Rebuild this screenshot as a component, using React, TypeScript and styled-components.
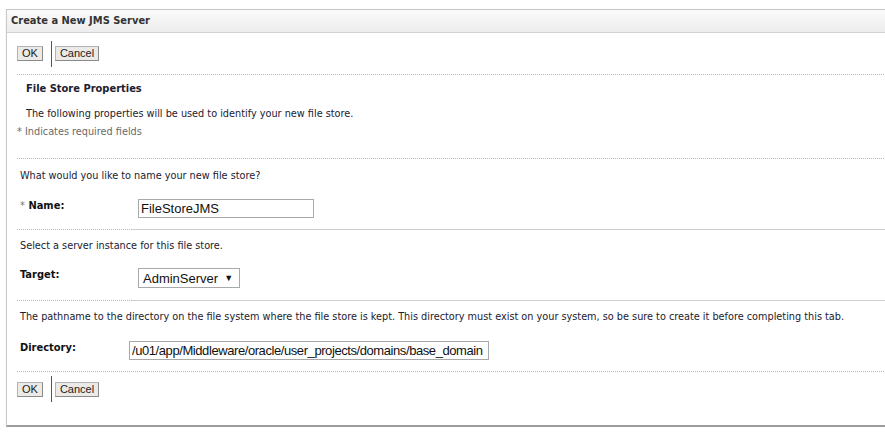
import React from "react";
import styled, { createGlobalStyle } from "styled-components";

const Global = createGlobalStyle`
  html, body { margin: 0; padding: 0; background: #fff; overflow: hidden; }
  body { font-family: "Liberation Sans", Arial, sans-serif; font-size: 11px; color: #1a1a1a; }
`;

const Page = styled.div`
  padding: 9px 0 0 6px;
  width: 900px;
`;

const Panel = styled.section`
  border-top: 1px solid #c6c6c6;
  border-left: 1px solid #c9c9c9;
  border-bottom: 2px solid #9c9c9c;
  box-shadow: 0 1px 1px #d8d8d8;
  background: #fff;
  height: 418px;
  box-sizing: border-box;
`;

const Header = styled.h1`
  margin: 0;
  height: 22px;
  line-height: 22px;
  padding-left: 4px;
  background: linear-gradient(#fbfbfb, #ececec);
  border-bottom: 1px solid #d2d2d2;
  font-family: "DejaVu Sans Condensed", "DejaVu Sans", sans-serif;
  font-size: 11px;
  font-weight: bold;
  color: #333;
`;

const Body = styled.div`
  padding-left: 10px;
`;

const ButtonBar = styled.div<{ $h: number }>`
  display: flex;
  align-items: center;
  height: ${(p) => p.$h}px;
`;

const Button = styled.button`
  font-family: "Liberation Sans", Arial, sans-serif;
  font-size: 11px;
  color: #222;
  background: #ebeae6;
  border: 1px solid #b4b4b4;
  border-right-color: #8a8a8a;
  border-bottom-color: #8a8a8a;
  height: 15px;
  padding: 0 4px;
  line-height: 13px;
  margin: 0;
`;

const Sep = styled.span`
  width: 1px;
  height: 26px;
  background: #555;
  margin: 0 3px 0 8px;
`;

const Dotted = styled.div`
  border-top: 1px dotted #b8b8b8;
`;

const Spacer = styled.div<{ $h: number }>`
  height: ${(p) => p.$h}px;
`;

const Split = styled.div`
  display: flex;
`;

const SplitDots = styled.span<{ $w: number }>`
  width: ${(p) => p.$w}px;
  border-top: 1px dotted #b8b8b8;
`;

const SplitSolid = styled.span`
  flex: 1;
  border-top: 1px solid #cfcfcf;
`;

const Text = styled.div<{ $h: number; $indent?: number; $bold?: boolean; $gray?: boolean }>`
  height: ${(p) => p.$h}px;
  line-height: ${(p) => p.$h}px;
  padding-left: ${(p) => p.$indent ?? 0}px;
  font-family: "DejaVu Sans Condensed", "DejaVu Sans", sans-serif;
  font-size: ${(p) => (p.$bold ? 11 : 10.8)}px;
  font-weight: ${(p) => (p.$bold ? "bold" : "normal")};
  color: ${(p) => (p.$gray ? "#6a6a6a" : "#1c2130")};
  white-space: nowrap;
`;

const Req = styled.span`
  color: #777;
  font-weight: normal;
`;

const FieldRow = styled.div<{ $h: number; $label: number; $top: number }>`
  display: grid;
  grid-template-columns: ${(p) => p.$label}px auto;
  align-items: start;
  height: ${(p) => p.$h}px;
  box-sizing: border-box;
  padding: ${(p) => p.$top}px 0 0 3px;
`;

const Label = styled.label`
  font-family: "DejaVu Sans Condensed", "DejaVu Sans", sans-serif;
  font-size: 11px;
  line-height: 13px;
  font-weight: bold;
  color: #111;
`;

const Input = styled.input<{ $w: number; $tight?: boolean }>`
  width: ${(p) => p.$w}px;
  height: 19px;
  box-sizing: border-box;
  border: 1px solid #a9a9a9;
  padding: 0 2px;
  font-family: "Liberation Sans", Arial, sans-serif;
  font-size: 13px;
  letter-spacing: ${(p) => (p.$tight ? "-0.42px" : "0")};
  color: #111;
  outline: none;
`;

const Select = styled.div`
  width: 102px;
  height: 20px;
  box-sizing: border-box;
  border: 1px solid #a9a9a9;
  display: flex;
  align-items: center;
  gap: 6px;
  padding: 0 4px;
  font-family: "Liberation Sans", Arial, sans-serif;
  font-size: 13px;
  color: #111;
`;

const Caret = styled.span`
  font-size: 9px;
`;

const Required = styled.div`
  height: 14px;
  line-height: 14px;
  font-family: "DejaVu Sans Condensed", "DejaVu Sans", sans-serif;
  font-size: 10.8px;
  color: #6a6a6a;
`;

export default function App() {
  return (
    <>
      <Global />
      <Page>
        <Panel>
          <Header>Create a New JMS Server</Header>
          <Body>
            <ButtonBar $h={41}>
              <Button>OK</Button>
              <Sep />
              <Button>Cancel</Button>
            </ButtonBar>
            <Dotted />
            <Text $h={27} $indent={9} $bold>File Store Properties</Text>
            <Text $h={23} $indent={9}>The following properties will be used to identify your new file store.</Text>
            <Required>* Indicates required fields</Required>
            <Spacer $h={19} />
            <Dotted />
            <Text $h={33} $indent={3}>What would you like to name your new file store?</Text>
            <FieldRow $h={37} $label={118} $top={7}>
              <Label><Req>*</Req> Name:</Label>
              <Input $w={176} defaultValue="FileStoreJMS" />
            </FieldRow>
            <Split>
              <SplitDots $w={115} />
              <SplitSolid />
            </Split>
            <Text $h={31} $indent={3}>Select a server instance for this file store.</Text>
            <FieldRow $h={39} $label={118} $top={7}>
              <Label>Target:</Label>
              <Select>
                AdminServer <Caret>▼</Caret>
              </Select>
            </FieldRow>
            <Split>
              <SplitDots $w={115} />
              <SplitSolid />
            </Split>
            <Text $h={31} $indent={3}>
              The pathname to the directory on the file system where the file store is kept. This directory must exist on your system, so be sure to create it before completing this tab.
            </Text>
            <FieldRow $h={39} $label={109} $top={9}>
              <Label>Directory:</Label>
              <Input $w={360} $tight defaultValue="/u01/app/Middleware/oracle/user_projects/domains/base_domain" />
            </FieldRow>
            <Dotted />
            <ButtonBar $h={34}>
              <Button>OK</Button>
              <Sep />
              <Button>Cancel</Button>
            </ButtonBar>
          </Body>
        </Panel>
      </Page>
    </>
  );
}
